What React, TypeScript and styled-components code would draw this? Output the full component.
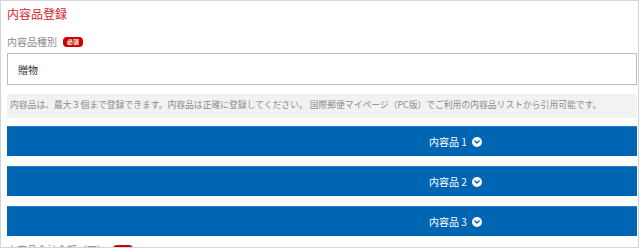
import React from "react";
import styled, { createGlobalStyle } from "styled-components";

const Global = createGlobalStyle`
  html, body {
    margin: 0;
    padding: 0;
    background: #ffffff;
  }
  body {
    font-family: "Noto Sans CJK JP", "Noto Sans", sans-serif;
  }
`;

const Frame = styled.div`
  box-sizing: border-box;
  width: 639px;
  height: 248px;
  border: 1px solid #d4d4d4;
  padding: 0 1px 0 6px;
  overflow: hidden;
  background: #fff;
`;

const Title = styled.h2`
  margin: 0;
  font-size: 12px;
  font-weight: normal;
  line-height: 25px;
  color: #d9232d;
`;

const LabelRow = styled.div<{ $top: number }>`
  display: flex;
  align-items: center;
  gap: 6px;
  height: 16px;
  margin-top: ${({ $top }) => $top}px;
`;

const Label = styled.span`
  font-size: 10px;
  color: #8a8a8a;
  line-height: 16px;
`;

const Required = styled.span`
  display: inline-flex;
  align-items: center;
  justify-content: center;
  width: 20px;
  height: 10px;
  border-radius: 4px;
  background: #cc0000;
  color: #fff;
  font-size: 6px;
  font-weight: bold;
  line-height: 10px;
`;

const Select = styled.div`
  box-sizing: border-box;
  height: 32px;
  margin-top: 3px;
  border: 1px solid #bdbdbd;
  padding-left: 10px;
  display: flex;
  align-items: center;
  font-size: 10px;
  color: #333;
`;

const Note = styled.p`
  margin: 9px 0 0;
  height: 24px;
  background: #f2f2f2;
  padding-left: 3px;
  font-size: 8.8px;
  line-height: 22px;
  color: #8c8c8c;
  white-space: nowrap;
  overflow: hidden;
`;

const Items = styled.div`
  display: flex;
  flex-direction: column;
  gap: 10px;
  margin-top: 8px;
`;

const ItemBar = styled.button`
  box-sizing: border-box;
  height: 30px;
  width: 100%;
  border: none;
  border-top: 1px solid #2a7cc2;
  background: #0066b3;
  color: #fff;
  padding: 0 0 0 267px;
  display: flex;
  align-items: center;
  justify-content: center;
  gap: 5px;
  font-family: inherit;
  font-size: 10px;
  cursor: pointer;
`;

const Chevron = () => (
  <svg width="10" height="10" viewBox="0 0 10 10">
    <circle cx="5" cy="5" r="5" fill="#fff" />
    <polyline
      points="2.9,4 5,6 7.1,4"
      fill="none"
      stroke="#0066b3"
      strokeWidth="1.5"
      strokeLinecap="round"
      strokeLinejoin="round"
    />
  </svg>
);

const items = ["内容品 1", "内容品 2", "内容品 3"];

export default function App() {
  return (
    <>
      <Global />
      <Frame>
        <Title>内容品登録</Title>
        <LabelRow $top={8}>
          <Label>内容品種別</Label>
          <Required>必須</Required>
        </LabelRow>
        <Select>贈物</Select>
        <Note>
          内容品は、最大３個まで登録できます。内容品は正確に登録してください。 国際郵便マイページ（PC版）でご利用の内容品リストから引用可能です。
        </Note>
        <Items>
          {items.map((name) => (
            <ItemBar key={name} type="button">
              {name}
              <Chevron />
            </ItemBar>
          ))}
        </Items>
        <LabelRow $top={6}>
          <Label>内容品合計金額（円）</Label>
          <Required>必須</Required>
        </LabelRow>
      </Frame>
    </>
  );
}
